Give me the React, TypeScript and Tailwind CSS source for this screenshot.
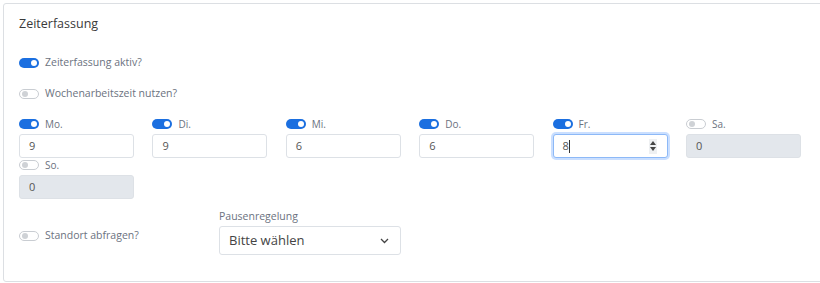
import React from "react";

const F = { fontFamily: '"Open Sans", "Noto Sans", sans-serif' };

function Toggle({ on }: { on: boolean }) {
  return on ? (
    <span className="relative inline-block w-[20px] h-[10px] rounded-full bg-[#1b6fe0] shrink-0">
      <span className="absolute right-[2px] top-[2px] w-[6px] h-[6px] rounded-full bg-white" />
    </span>
  ) : (
    <span className="relative inline-block w-[20px] h-[10px] rounded-full border border-[#c9cdd2] bg-white shrink-0">
      <span className="absolute left-[2px] top-[1px] w-[6px] h-[6px] rounded-full bg-[#cfd2d6]" />
    </span>
  );
}

type Day = { label: string; on: boolean; value: string; focus?: boolean };

const days: Day[] = [
  { label: "Mo.", on: true, value: "9" },
  { label: "Di.", on: true, value: "9" },
  { label: "Mi.", on: true, value: "6" },
  { label: "Do.", on: true, value: "6" },
  { label: "Fr.", on: true, value: "8", focus: true },
  { label: "Sa.", on: false, value: "0" },
  { label: "So.", on: false, value: "0" },
];

function DayCell({ d }: { d: Day }) {
  return (
    <div className="flex flex-col">
      <div className="flex items-center h-[13px] gap-[6px]">
        <Toggle on={d.on} />
        <span className="text-[10px] text-[#6b7280] leading-none">{d.label}</span>
      </div>
      <div
        className={
          "mt-[4px] h-[24px] rounded-[3px] border flex items-center pl-[9px] pr-[10px] text-[11px] text-[#555] " +
          (d.focus
            ? "border-[#8db9f7] bg-white shadow-[0_0_0_2px_rgba(13,110,253,0.22)]"
            : d.on
            ? "border-[#dde1e6] bg-white"
            : "border-[#dde1e6] bg-[#e3e7ec]")
        }
      >
        <span>{d.value}</span>
        {d.focus && <span className="inline-block w-[1px] h-[13px] bg-[#333]" />}
        {d.focus && (
          <span className="ml-auto w-[8px] h-[15px] bg-[#eef0f2] flex flex-col items-center justify-center gap-[2px]">
            <svg width="6" height="4" viewBox="0 0 6 4"><path d="M0 4 L3 0 L6 4 Z" fill="#444" /></svg>
            <svg width="6" height="4" viewBox="0 0 6 4"><path d="M0 0 L3 4 L6 0 Z" fill="#444" /></svg>
          </span>
        )}
      </div>
    </div>
  );
}

export default function App() {
  return (
    <div className="w-[820px] h-[283px] bg-white overflow-hidden" style={F}>
      <div className="ml-[3px] mt-[3px] w-[840px] h-[279px] border border-[#dcdfe3] rounded-[3px] pl-[15px] pt-[12px]">
        <div className="text-[12.5px] text-[#3a3a3a] leading-[16px]">Zeiterfassung</div>
        <div className="mt-[24px] flex items-center gap-[6px] h-[13px]">
          <Toggle on />
          <span className="text-[10.5px] text-[#6b7280]">Zeiterfassung aktiv?</span>
        </div>
        <div className="mt-[18px] flex items-center gap-[6px] h-[13px]">
          <Toggle on={false} />
          <span className="text-[10.5px] text-[#6b7280]">Wochenarbeitszeit nutzen?</span>
        </div>
        <div className="mt-[17px] grid grid-cols-6 gap-x-[18.4px] w-[782px]">
          {days.map((d) => (
            <DayCell key={d.label} d={d} />
          ))}
        </div>
        <div className="mt-[11px] flex items-end">
          <div className="w-[200px] h-[29px] mb-[5px] flex items-center gap-[6px]">
            <Toggle on={false} />
            <span className="text-[10.5px] text-[#6b7280]">Standort abfragen?</span>
          </div>
          <div className="flex flex-col">
            <span className="text-[10.5px] text-[#6b7280] leading-[13px]">Pausenregelung</span>
            <div className="mt-[3px] w-[182px] h-[29px] border border-[#dde1e6] rounded-[3px] flex items-center pl-[9px] pr-[11px]">
              <span className="text-[13px] text-[#444]">Bitte wählen</span>
              <svg className="ml-auto" width="9" height="6" viewBox="0 0 9 6">
                <path d="M1 1 L4.5 4.5 L8 1" stroke="#444" strokeWidth="1.3" fill="none" />
              </svg>
            </div>
          </div>
        </div>
      </div>
    </div>
  );
}
